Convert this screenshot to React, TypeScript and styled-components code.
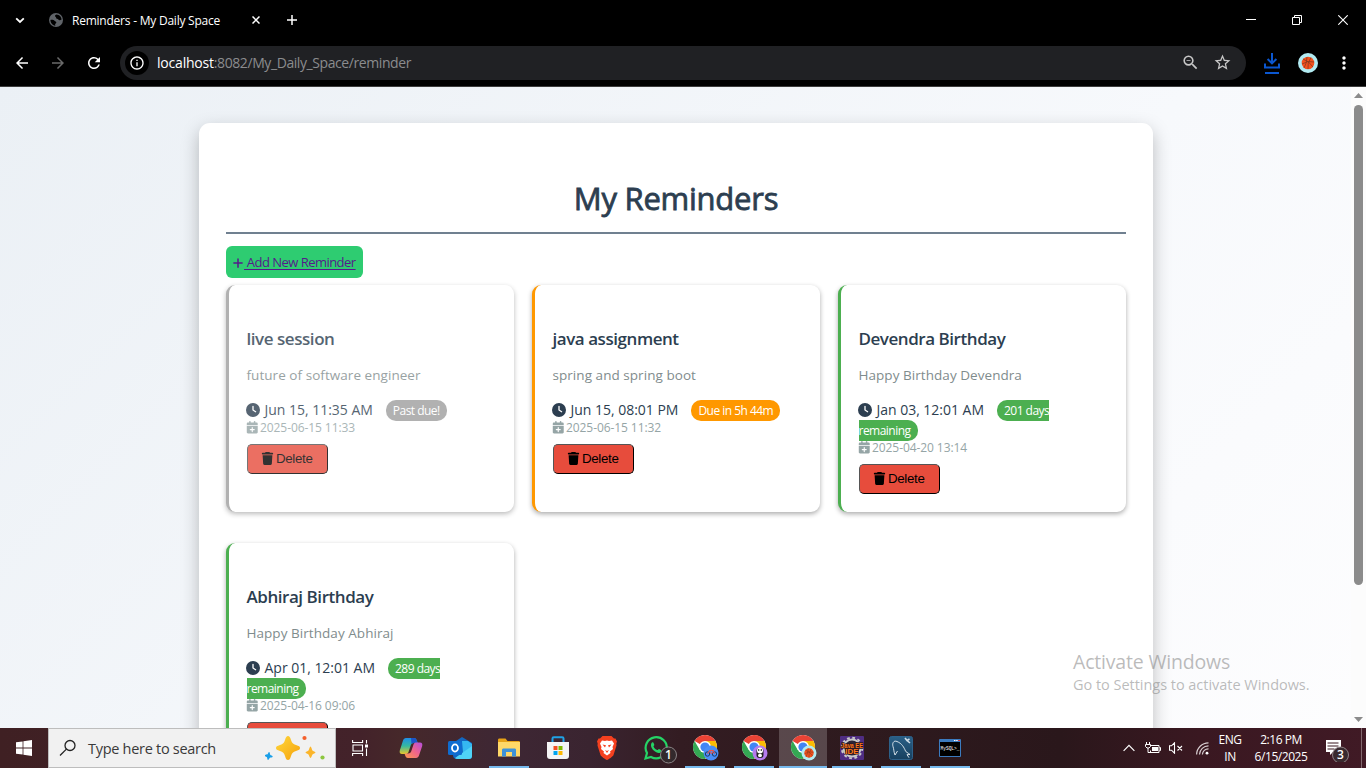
import React from "react";
import styled, { createGlobalStyle } from "styled-components";
import { FaClock, FaCalendarPlus, FaTrash, FaPlus } from "react-icons/fa6";
import { MdArrowBack, MdArrowForward, MdRefresh, MdStarBorder, MdMoreVert, MdZoomOut, MdOutlineInfo } from "react-icons/md";

const UI = `"Open Sans", "Noto Sans", sans-serif`;

const GlobalStyle = createGlobalStyle`
  * { box-sizing: border-box; }
  body { margin: 0; overflow: hidden; font-family: ${UI}; }
  svg { display: block; }
`;

const Screen = styled.div`
  position: relative;
  width: 1366px;
  height: 768px;
  display: flex;
  flex-direction: column;
  overflow: hidden;
`;

/* ---------- browser chrome ---------- */
const TabStrip = styled.div`
  height: 40px;
  background: #000;
  display: flex;
  align-items: center;
  color: #fff;
`;
const Slot = styled.div<{ $w: number }>`
  width: ${(p) => p.$w}px;
  flex: none;
  display: flex;
  align-items: center;
  justify-content: center;
`;
const TabTitle = styled.div`
  width: 176px;
  padding: 1px 0 0 4px;
  font-size: 12px;
  line-height: 20px;
  letter-spacing: -0.23px;
  white-space: nowrap;
`;
const Grow = styled.div`
  flex: 1;
`;
const Toolbar = styled.div`
  height: 47px;
  background: #000;
  border-bottom: 1px solid #3c3c3c;
  display: flex;
  align-items: center;
  padding: 0 0 1px 4px;
  color: #fff;
`;
const Omnibox = styled.div`
  width: 1126px;
  height: 34px;
  margin-left: 8px;
  border-radius: 17px;
  background: #202124;
  display: flex;
  align-items: center;
  padding: 0 8px 0 5px;
`;
const SiteInfo = styled.div`
  width: 24px;
  height: 24px;
  border-radius: 50%;
  background: #000;
  display: flex;
  align-items: center;
  justify-content: center;
`;
const Url = styled.div`
  margin-left: 8px;
  font-size: 14px;
  line-height: 20px;
  letter-spacing: -0.42px;
  color: #8b8c8e;
  white-space: nowrap;
  b { font-weight: 400; letter-spacing: -0.2px; color: #fff; }
`;

/* ---------- page ---------- */
const Viewport = styled.div`
  height: 641px;
  display: flex;
  overflow: hidden;
  background: #fcfcfc;
`;
const Page = styled.main`
  width: 1351px;
  padding: 36px 198px 0 199px;
  background: linear-gradient(135deg, #ebf0f5 0%, #f7f9fc 60%, #fdfdfe 100%);
`;
const Panel = styled.section`
  width: 954px;
  height: 700px;
  padding: 54px 27px 0;
  border-radius: 11px;
  background: #fff;
  box-shadow: 0 7px 18px rgba(0, 0, 0, 0.25);
`;
const Heading = styled.h1`
  margin: 0;
  height: 57px;
  border-bottom: 2px solid #708090;
  text-align: center;
  font-size: 31px;
  line-height: 43px;
  font-weight: 400;
  letter-spacing: -0.25px;
  -webkit-text-stroke: 0.8px #2c3e50;
  color: #2c3e50;
`;
const AddLink = styled.a`
  display: flex;
  align-items: center;
  width: 137px;
  height: 32px;
  margin: 12px 0 7px;
  padding: 0 0 0 6px;
  border-radius: 6px;
  background: #2ecc71;
  color: #551a8b;
  font-size: 13px;
  line-height: 18px;
  letter-spacing: -0.53px;
  text-decoration: none;
  white-space: nowrap;
  svg { margin-top: 2px; }
`;
const AddLabel = styled.span`
  text-decoration: underline 1px;
  text-underline-offset: 2px;
  white-space: pre;
`;
const Grid = styled.div`
  display: grid;
  grid-template-columns: repeat(3, 288px);
  column-gap: 18px;
  row-gap: 31px;
`;
const Card = styled.article<{ $accent: string; $past?: boolean }>`
  height: 227px;
  padding: 42px 18px 0 17.5px;
  border-left: 3px solid ${(p) => p.$accent};
  border-radius: 9px;
  background: #fff;
  box-shadow: 0 2px 5px rgba(0, 0, 0, 0.33);
  opacity: ${(p) => (p.$past ? 0.8 : 1)};
`;
const CardTitle = styled.h2`
  margin: 0 0 15px;
  font-size: 17px;
  line-height: 24px;
  font-weight: 600;
  letter-spacing: -0.45px;
  color: #2c3e50;
`;
const Description = styled.p`
  margin: 0 0 15px;
  font-size: 13.5px;
  line-height: 19px;
  letter-spacing: 0.05px;
  color: #7f8c8d;
`;
const When = styled.div`
  width: 249px;
  font-size: 14px;
  line-height: 20px;
  letter-spacing: -0.02px;
  color: #2c3e50;
  svg { display: inline-block; vertical-align: -2px; margin: 0 4.5px 0 -0.5px; }
`;
const Badge = styled.span<{ $color: string }>`
  margin-left: 13px;
  padding: 2px 7px 1.5px;
  border-radius: 10px;
  background: ${(p) => p.$color};
  color: #fff;
  font-size: 12px;
  line-height: 16px;
  letter-spacing: -0.52px;
`;
const Created = styled.div`
  display: flex;
  align-items: center;
  gap: 2px;
  height: 15px;
  margin-left: -1px;
  font-size: 12px;
  line-height: 15px;
  letter-spacing: -0.08px;
  color: #95a5a6;
`;
const DeleteButton = styled.button`
  display: flex;
  align-items: center;
  justify-content: center;
  gap: 2px;
  width: 81px;
  height: 30px;
  margin: 9px 0 0 0.5px;
  padding: 0 1.5px 2px 0;
  border: 1px solid;
  border-color: #555 #000 #000 #555;
  border-radius: 5px;
  background: #e74c3c;
  color: #000;
  font: 13.33px "Liberation Sans", Arial, sans-serif;
  letter-spacing: -0.3px;
`;
const ScrollTrack = styled.div`
  width: 15px;
  display: flex;
  flex-direction: column;
  align-items: center;
  padding: 6px 0 6px;
`;
const ScrollThumb = styled.div`
  width: 9px;
  height: 480px;
  margin-top: 7px;
  border-radius: 5px;
  background: #8b8b8b;
`;
const Watermark = styled.div`
  position: absolute;
  left: 1073px;
  top: 650px;
  color: rgba(120, 120, 120, 0.5);
  white-space: nowrap;
`;
const WatermarkTitle = styled.div`
  font-size: 19.5px;
  line-height: 24px;
  letter-spacing: -0.19px;
`;
const WatermarkText = styled.div`
  font-size: 14.5px;
  line-height: 22px;
  letter-spacing: -0.03px;
`;

/* ---------- taskbar ---------- */
const Taskbar = styled.footer`
  height: 40px;
  display: flex;
  background: linear-gradient(90deg, #3f2023 0, #43222a 360px, #46282a 400px, #3e2734 500px, #3a2430 590px, #331c22 680px, #2e1a1e 860px, #2a171b 1060px, #3a1821 1200px, #401a25 100%);
`;
const SearchBox = styled.div`
  width: 288px;
  height: 40px;
  border: 1px solid #bdbdbd;
  background: #f1f1f1;
  display: flex;
  align-items: center;
  padding-left: 10px;
`;
const SearchText = styled.div`
  width: 177px;
  margin-left: 11px;
  font-size: 14.5px;
  letter-spacing: -0.29px;
  color: #3a3a3a;
  white-space: nowrap;
`;
const AppSlot = styled.div<{ $state?: "open" | "active" }>`
  position: relative;
  width: 49px;
  height: 40px;
  padding-right: 1px;
  display: flex;
  align-items: center;
  justify-content: center;
  &::before {
    content: "";
    position: absolute;
    inset: 0 1px 0 0;
    background: ${(p) => (p.$state === "active" ? "rgba(255,255,255,.2)" : "none")};
  }
  &::after {
    content: "";
    position: absolute;
    bottom: 0;
    left: ${(p) => (p.$state === "active" ? 0 : 4)}px;
    width: ${(p) => (p.$state === "active" ? 48 : 40)}px;
    height: 2px;
    background: ${(p) => (p.$state ? "#76b9ed" : "none")};
  }
  svg { position: relative; overflow: visible; }
`;
const Clock = styled.div<{ $w: number }>`
  width: ${(p) => p.$w}px;
  text-align: center;
  color: #fff;
  font-size: 12px;
  line-height: 17px;
  letter-spacing: -0.45px;
  padding-top: 3px;
  white-space: nowrap;
`;
const ShowDesktop = styled.div`
  width: 5px;
  border-left: 1px solid #82686e;
`;

type Reminder = { title: string; text: string; when: string; badge: string; created: string; accent: string; past?: boolean };
const reminders: Reminder[] = [
  { title: "live session", text: "future of software engineer", when: "Jun 15, 11:35 AM", badge: "Past due!", created: "2025-06-15 11:33", accent: "#9e9e9e", past: true },
  { title: "java assignment", text: "spring and spring boot", when: "Jun 15, 08:01 PM", badge: "Due in 5h 44m", created: "2025-06-15 11:32", accent: "#ff9800" },
  { title: "Devendra Birthday", text: "Happy Birthday Devendra", when: "Jan 03, 12:01 AM", badge: "201 days remaining", created: "2025-04-20 13:14", accent: "#4caf50" },
  { title: "Abhiraj Birthday", text: "Happy Birthday Abhiraj", when: "Apr 01, 12:01 AM", badge: "289 days remaining", created: "2025-04-16 09:06", accent: "#4caf50" },
];

const ChromeLogo = ({ children }: { children: React.ReactNode }) => (
  <svg width="26" height="26" viewBox="0 0 26 26">
    <circle cx="13" cy="12" r="12" fill="#fff" />
    <path d="M13 12 2.6 6A12 12 0 0 1 23.4 6z" fill="#ea4335" />
    <path d="M13 6h10.4A12 12 0 0 1 13 24l5.2-9z" fill="#fbbc04" />
    <path d="M7.8 15 2.6 6A12 12 0 0 0 13 24l5.2-9z" fill="#34a853" />
    <circle cx="13" cy="12" r="6" fill="#fff" />
    <circle cx="13" cy="12" r="4.6" fill="#4285f4" />
    {children}
  </svg>
);
const Basketball = ({ x, y, r }: { x: number; y: number; r: number }) => (
  <g transform={`translate(${x} ${y}) scale(${r / 10})`}>
    <circle r="10" fill="#b2ebf2" />
    <circle r="6.3" fill="#f4511e" />
    <path d="M-5 -4Q1 -2 5 4M-1 -6Q-1 0 -4 5M3 -5.5Q-1 0 0 6M-6 1Q0 -3 6 -1" stroke="#8a3a1c" strokeWidth=".8" fill="none" />
  </g>
);

export default function App() {
  return (
    <Screen>
      <GlobalStyle />
      <TabStrip>
        <Slot $w={40}><svg width="10" height="7" viewBox="0 0 10 7"><path d="M1.2 1.3 5 5l3.8-3.7" fill="none" stroke="#fff" strokeWidth="1.8" /></svg></Slot>
        <Slot $w={8} />
        <Slot $w={16}>
          <svg width="14" height="14" viewBox="0 0 14 14">
            <circle cx="7" cy="7" r="7" fill="#5f6368" />
            <path d="M7.500 1.500C6 2 5.500 3 6.500 3.800s.3 1.700 1.500 2 1.700 1.700 3 1.400l1.600-.8C12.400 4 10.500 1.700 7.500 1.500zM1.400 7c1.200-.5 3.400-.2 4.100.8s1.600.7 1.800 1.600-1.200 1-1.200 1.900.4 1.200.2 1.400C3.500 12.400 1.500 10 1.400 7z" fill="#000" />
          </svg>
        </Slot>
        <Slot $w={4} />
        <TabTitle>Reminders - My Daily Space</TabTitle>
        <Slot $w={24}><svg width="8" height="8" viewBox="0 0 8 8"><path d="M.5.5l7 7M7.5.5l-7 7" stroke="#fff" strokeWidth="1.5" /></svg></Slot>
        <Slot $w={48}><svg width="10" height="10" viewBox="0 0 10 10"><path d="M5 0v10M0 5h10" stroke="#fff" strokeWidth="1.5" /></svg></Slot>
        <Grow />
        <Slot $w={46}><svg width="10" height="10" viewBox="0 0 10 10"><path d="M0 4.5h10" stroke="#fff" /></svg></Slot>
        <Slot $w={46}><svg width="10" height="10" viewBox="0 0 10 10"><path d="M.5 2.5h7v7h-7zM2.5 2.5v-2h7v7h-2" stroke="#fff" fill="none" /></svg></Slot>
        <Slot $w={46}><svg width="10" height="10" viewBox="0 0 10 10"><path d="M.3.3l9.4 9.4M9.7.3.3 9.7" stroke="#fff" strokeWidth="1.1" /></svg></Slot>
      </TabStrip>
      <Toolbar>
        <Slot $w={36}><MdArrowBack size={18} /></Slot>
        <Slot $w={36}><MdArrowForward size={18} color="#6a6a6a" /></Slot>
        <Slot $w={36}><MdRefresh size={18} /></Slot>
        <Omnibox>
          <SiteInfo><MdOutlineInfo size={16} /></SiteInfo>
          <Url><b>localhost</b>:8082/My_Daily_Space/reminder</Url>
          <Grow />
          <Slot $w={32}><MdZoomOut size={19} color="#c7c7c7" /></Slot>
          <Slot $w={32}><MdStarBorder size={19} color="#c7c7c7" /></Slot>
        </Omnibox>
        <Slot $w={52}>
          <svg width="16" height="22" viewBox="0 0 16 22"><path d="M8 1v10M3.6 7 8 11.4 12.4 7M1 11.5v4h14v-4M1 21h14" fill="none" stroke="#0b57d0" strokeWidth="2" /></svg>
        </Slot>
        <Slot $w={20}><svg width="20" height="20" viewBox="0 0 20 20"><Basketball x={10} y={10} r={10} /></svg></Slot>
        <Slot $w={4} />
        <Slot $w={44}><MdMoreVert size={20} /></Slot>
      </Toolbar>

      <Viewport>
        <Page>
          <Panel>
            <Heading>My Reminders</Heading>
            <AddLink href="#"><FaPlus size={12} /><AddLabel> Add New Reminder</AddLabel></AddLink>
            <Grid>
              {reminders.map((r) => (
                <Card key={r.title} $accent={r.accent} $past={r.past}>
                  <CardTitle>{r.title}</CardTitle>
                  <Description>{r.text}</Description>
                  <When><FaClock size={14} />{r.when}<Badge $color={r.accent}>{r.badge}</Badge></When>
                  <Created><FaCalendarPlus size={12.5} />{r.created}</Created>
                  <DeleteButton><FaTrash size={13} />Delete</DeleteButton>
                </Card>
              ))}
            </Grid>
          </Panel>
        </Page>
        <ScrollTrack>
          <svg width="9" height="5" viewBox="0 0 9 5"><path d="M0 5 4.5 0 9 5z" fill="#8b8b8b" /></svg>
          <ScrollThumb />
          <Grow />
          <svg width="9" height="5" viewBox="0 0 9 5"><path d="M0 0 4.5 5 9 0z" fill="#8b8b8b" /></svg>
        </ScrollTrack>
      </Viewport>

      <Taskbar>
        <Slot $w={48}>
          <svg width="16" height="16" viewBox="0 0 16 16" fill="#fff"><path d="M0 2.3 6.6 1.4v6.2H0zM7.4 1.2 16 0v7.6H7.4zM0 8.4h6.6v6.2L0 13.7zM7.4 8.4H16V16l-8.6-1.2z" /></svg>
        </Slot>
        <SearchBox>
          <svg width="18" height="18" viewBox="0 0 18 18"><circle cx="11" cy="6.5" r="5" fill="none" stroke="#222" strokeWidth="1.3" /><path d="M7.4 10.1 1 16.5" stroke="#222" strokeWidth="1.3" /></svg>
          <SearchText>Type here to search</SearchText>
          <svg width="62" height="26" viewBox="1 0 62 26">
            <defs><linearGradient id="gold" x1="0" y1="0" x2="1" y2="1"><stop offset="0" stopColor="#ffd83d" /><stop offset="1" stopColor="#f5a10a" /></linearGradient></defs>
            <path d="M24 1c1.500 0 2 1 3 4s2 4 5 5 4 1.500 4 3-1 2-4 3-4 2-5 5-1.500 4-3 4-2-1-3-4-2-4-5-5-4-1.500-4-3 1-2 4-3 4-2 5-5 1.500-4 3-4z" fill="url(#gold)" />
            <path d="M46.500 11.500c.8 0 1.500 3.500 2 4s3 1.200 3 2-2.500 1.500-3 2-1.200 3.500-2 3.500-1.500-3-2-3.500-3-1.200-3-2 2.500-1.500 3-2 1.200-4 2-4z" fill="#fbb52b" />
            <path d="M4.500 17c.8 0 1 2 1.500 2.500s3 .7 2.800 1.600-2 1-2.600 1.500-.6 2.400-1.500 2.400-1-2-1.500-2.500-2.600-.7-2.500-1.600 2-1 2.500-1.500.5-2.400 1.300-2.400z" fill="#1a9fe8" transform="rotate(10 4.500 21)" />
            <circle cx="40.500" cy="3" r="2.100" fill="#f4602c" /><circle cx="58.500" cy="22.500" r="2.100" fill="#8cc63f" />
          </svg>
        </SearchBox>
        <Slot $w={48}>
          <svg width="17" height="16" viewBox="0 0 17 16" fill="none" stroke="#fff" strokeWidth="1.1"><path d="M.6 0v2.500h10V0M.6 16v-2.500h10V16M1 5h9.500v6H1zM14.500 0v3.500M14.500 8.500V16" /><path d="M13 4.500h3v3h-3z" fill="#fff" stroke="none" /></svg>
        </Slot>
        <Slot $w={3} />
        <AppSlot>
          <svg width="24" height="22" viewBox="0 0 24 22">
            <defs>
              <linearGradient id="cpa" x1="0" y1="0" x2="0" y2="1"><stop offset="0" stopColor="#1f8ee8" /><stop offset=".5" stopColor="#35b9a0" /><stop offset="1" stopColor="#e8c82a" /></linearGradient>
              <linearGradient id="cpb" x1="1" y1="0" x2="0" y2="1"><stop offset="0" stopColor="#b44de0" /><stop offset=".5" stopColor="#f0658a" /><stop offset="1" stopColor="#fb9a4a" /></linearGradient>
            </defs>
            <path d="M7 1h8c2 0 2.500 1.500 3 3l.7 2H15c-2 0-3 1-3.500 3L9.500 15c-.5 1.500-1.500 2-3 2H3C1 17 .3 15.500.8 13.500L4 3.500C4.500 2 5.500 1 7 1z" fill="url(#cpa)" />
            <path d="M12 1h3c2 0 2.500 1.500 3 3l.7 2H15c-1 0-2 .3-2.500 1z" fill="#1b54c8" />
            <path d="M17 21H9c-2 0-2.500-1.500-3-3l-.5-1.500H9c2 0 3-1 3.500-3l2-6c.5-1.500 1.500-2 3-2H21c2 0 2.700 1.500 2.200 3.500L20 18.500c-.5 1.500-1.500 2.500-3 2.500z" fill="url(#cpb)" />
          </svg>
        </AppSlot>
        <AppSlot>
          <svg width="24" height="22" viewBox="0 0 24 22">
            <path d="M5 6 14 0l10 6v13a3 3 0 0 1-3 3H9a4 4 0 0 1-4-4z" fill="#1367c0" />
            <path d="M14 4h6l4 3v4l-9 5z" fill="#35b8f1" /><path d="M24 9v10a3 3 0 0 1-3 3H9a4 4 0 0 1-2-1z" fill="#4fd3f7" />
            <rect y="4" width="14" height="14" rx="1.500" fill="#0f6cd0" />
            <ellipse cx="7" cy="11" rx="3" ry="3.600" fill="none" stroke="#fff" strokeWidth="1.800" />
          </svg>
        </AppSlot>
        <AppSlot $state="open">
          <svg width="22" height="20" viewBox="0 0 22 20">
            <path d="M0 2c0-1 .5-1.500 1.500-1.500h6L9.500 3H20.500c1 0 1.500.5 1.500 1.500V18H0z" fill="#e8a317" />
            <path d="M0 4h22v14.500H0z" fill="#ffd868" /><path d="M4 18.500V12c0-1 .7-1.500 1.500-1.500h11c1 0 1.500.5 1.500 1.500v6.500h-4V14H8v4.500z" fill="#3e92d8" />
          </svg>
        </AppSlot>
        <AppSlot>
          <svg width="24" height="24" viewBox="0 0 24 24">
            <path d="M1 6h22v14a3 3 0 0 1-3 3H4a3 3 0 0 1-3-3z" fill="#f4f4f4" /><path d="M6.500 6V2.500c0-.8.500-1.300 1.300-1.300h8.400c.8 0 1.300.5 1.300 1.300V6" fill="none" stroke="#1fa2e6" strokeWidth="2" />
            <path d="M7.500 10h4v4h-4z" fill="#f25022" /><path d="M12.500 10h4v4h-4z" fill="#7fba00" /><path d="M7.500 15h4v4h-4z" fill="#00a4ef" /><path d="M12.500 15h4v4h-4z" fill="#ffb900" />
          </svg>
        </AppSlot>
        <AppSlot>
          <svg width="20" height="24" viewBox="0 0 20 24">
            <path d="M5.500 0h9L17 2.500h1.500L20 5.500l-.7 2 .2 2-3 9.500c-.5 1.500-5 4.500-6.500 5-1.500-.5-6-3.500-6.500-5l-3-9.500.2-2-.7-2L1.500 2.500H3z" fill="#f5401f" />
            <path d="M5 4.500 8 5l2-.5 2 .5 3-.5 2 3-1.500 3.500.5 2-3 2.500.5 1.500L10 19.500 6.500 17l.5-1.500L4 13l.5-2L3 7.500z" fill="#fff" />
            <path d="M5.500 8.500 9 9.200 8 11.500zM14.500 8.500 11 9.200l1 2.300zM8 14l2 1 2-1-2 3z" fill="#f5401f" />
          </svg>
        </AppSlot>
        <AppSlot>
          <svg width="24" height="24" viewBox="0 0 24 24">
            <path d="M1.500 22.500 3 17A10.600 10.600 0 1 1 7 21z" fill="none" stroke="#25d366" strokeWidth="2.200" />
            <path d="M8 6.500c1-.7 1.300-.3 1.700.7l.6 1.500c.2.600-1 1.300-.8 1.800.8 1.700 2 2.800 3.800 3.600.6.200 1.200-1.200 1.700-1l2 1c.5.3.2 1.700-.6 2.300-1.500 1.200-4.300.3-6.600-1.800-2.600-2.400-3.800-6-1.800-8.100z" fill="#25d366" />
            <circle cx="24.500" cy="19" r="8" fill="#33292c" stroke="#8b8486" /><text x="24.500" y="23.200" fontSize="12" fontWeight="600" textAnchor="middle" fill="#fff" fontFamily={UI}>1</text>
          </svg>
        </AppSlot>
        <AppSlot $state="open">
          <ChromeLogo><circle cx="19" cy="18" r="7.500" fill="#4a8df6" /><g fill="none" stroke="#1e3a5f" strokeWidth="1"><circle cx="15.500" cy="19" r="2.200" /><circle cx="22.500" cy="19" r="2.200" /><path d="m15.500 19 2-3.500h4l1 3.500M17.500 15.500l2 3.500 2-3.500" stroke="#e8554d" /></g></ChromeLogo>
        </AppSlot>
        <AppSlot $state="open">
          <ChromeLogo><circle cx="19" cy="18" r="7.500" fill="#b57bee" /><rect x="15.500" y="13" width="7" height="10" rx="3" fill="#222" /><circle cx="19" cy="15.500" r="3" fill="#fff" /><ellipse cx="19" cy="20.500" rx="2" ry="1.800" fill="#fff" /><path d="M17 15h1.300M19.700 15H21" stroke="#222" strokeWidth="1.300" /></ChromeLogo>
        </AppSlot>
        <AppSlot $state="active">
          <ChromeLogo><Basketball x={19} y={18} r={7.5} /></ChromeLogo>
        </AppSlot>
        <AppSlot $state="open">
          <svg width="24" height="24" viewBox="0 0 24 24">
            <rect width="24" height="24" rx="1" fill="#4f2d82" />
            <circle cx="12" cy="12" r="8.500" fill="#2b2437" stroke="#c9c9c9" strokeWidth="2" /><circle cx="12" cy="12" r="10.300" fill="none" stroke="#c9c9c9" strokeWidth="2" strokeDasharray="2.800 2.590" />
            <text x="12" y="11.500" textAnchor="middle" fontSize="7.500" fontWeight="700" fill="#ff7a18" stroke="#2a1420" strokeWidth="1.600" paintOrder="stroke" textLength="22" lengthAdjust="spacingAndGlyphs" fontFamily="Liberation Sans, sans-serif">Java EE</text>
            <text x="12" y="18" textAnchor="middle" fontSize="8" fontWeight="700" fill="#ff7a18" stroke="#2a1420" strokeWidth="1.200" paintOrder="stroke" fontFamily="Liberation Sans, sans-serif">IDE</text>
          </svg>
        </AppSlot>
        <AppSlot $state="open">
          <svg width="24" height="24" viewBox="0 0 24 24">
            <defs><linearGradient id="wb" x1="0" y1="0" x2="0" y2="1"><stop offset="0" stopColor="#2a5f86" /><stop offset="1" stopColor="#17405f" /></linearGradient></defs>
            <rect x=".5" y=".5" width="23" height="23" rx="2" fill="url(#wb)" stroke="#2d618a" />
            <path d="M6 19C4.500 15 5 13 4 10.500 3 7.500 4.500 4 8 5.500c5 2 7 6 8.500 9.500.5 1.200 2 1.500 4.500 3.500l-3 .2 2 3M6 19l2.500-4" fill="none" stroke="#e6eef4" strokeWidth=".9" />
            <path d="m16 2 2 2.500 2.500-1.500M18 4.500 21 7" stroke="#cfdde8" strokeWidth="1.600" fill="none" />
          </svg>
        </AppSlot>
        <AppSlot $state="open">
          <svg width="22" height="18" viewBox="0 0 22 18">
            <rect width="22" height="18" rx="1" fill="#3b7bbf" /><rect x="1" y="3" width="20" height="14" fill="#000" /><path d="M15 1.500h1.500M17.200 1.500h1.500" stroke="#fff" /><path d="M19.300 1.500h1.700" stroke="#e33" />
            <text x="1.500" y="11" fontSize="6" fill="#fff" textLength="19" lengthAdjust="spacingAndGlyphs" fontFamily="Liberation Mono, monospace">MySQL&gt;_</text>
          </svg>
        </AppSlot>
        <Grow />
        <Slot $w={24}><svg width="12" height="8" viewBox="0 0 12 8"><path d="M.6 6.800 6 1.400l5.400 5.400" fill="none" stroke="#fff" strokeWidth="1.200" /></svg></Slot>
        <Slot $w={24}><svg width="16" height="12" viewBox="0 0 16 12" fill="none" stroke="#fff"><path d="M5.500 3.500h8.500v7H5.500v-2M14.500 5.500h1v3h-1" /><path d="M7 5h6v4H7z" fill="#fff" stroke="none" /><path d="M1.500 0v2M4.500 0v2M.5 2.500h5v2L4 6H2L.5 4.500zM3 6v4.500h3" /></svg></Slot>
        <Slot $w={23}><svg width="15" height="12" viewBox="0 0 15 12" fill="none" stroke="#fff"><path d="M.5 3.800h2L5.500.8v10.400l-3-3h-2zM8.500 4l4.500 4.500M13 4 8.500 8.500" strokeWidth="1.100" /></svg></Slot>
        <Slot $w={2} />
        <Slot $w={24}><svg width="13" height="13" viewBox="0 0 13 13" fill="none" stroke="#d8ced1" strokeWidth="1.200"><path d="M.6 12.500A12 12 0 0 1 12.500.8M3.500 12.500a9 9 0 0 1 9-8.700M6.400 12.500a6 6 0 0 1 6.100-5.700" /><circle cx="11" cy="11.200" r="1.400" fill="#fff" stroke="none" /></svg></Slot>
        <Clock $w={32}>ENG<br />IN</Clock>
        <Clock $w={70}>2:16 PM<br />6/15/2025</Clock>
        <Slot $w={45}>
          <svg width="26" height="28" viewBox="2 0 26 28"><path d="M1 6h16v12H9l-3 3v-3H1z" fill="#fff" /><path d="M3.500 9h11M3.500 12h11M3.500 15h7" stroke="#3a1821" /><circle cx="16.500" cy="21" r="8" fill="#392a2f" stroke="#8f8286" /><text x="16.500" y="25.200" fontSize="12" fontWeight="600" textAnchor="middle" fill="#fff" fontFamily={UI}>3</text></svg>
        </Slot>
        <ShowDesktop />
      </Taskbar>
      <Watermark>
        <WatermarkTitle>Activate Windows</WatermarkTitle>
        <WatermarkText>Go to Settings to activate Windows.</WatermarkText>
      </Watermark>
    </Screen>
  );
}
